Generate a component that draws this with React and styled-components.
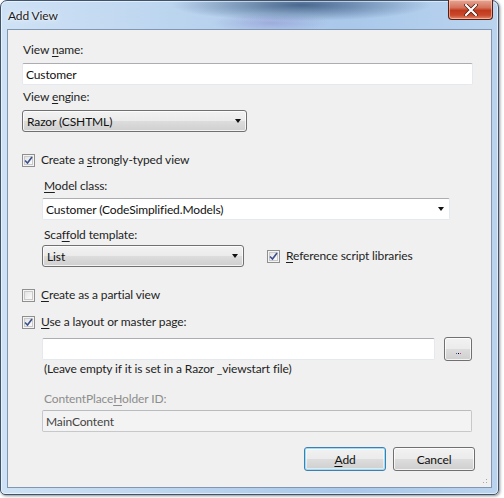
import React from "react";
import styled, { createGlobalStyle, css } from "styled-components";

const Global = createGlobalStyle`
  html, body { margin: 0; padding: 0; background: #ffffff; }
  body { width: 504px; height: 498px; overflow: hidden; font-family: "Lato", "Noto Sans", sans-serif; }
  * { box-sizing: border-box; }
`;

const FONT = `font-family: "Lato", "Noto Sans", sans-serif; font-size: 12px; letter-spacing: -0.12px;`;

const Window = styled.div`
  width: 499px;
  height: 495px;
  border: 1px solid #3e546e;
  border-radius: 7px 7px 5px 5px;
  background:
    radial-gradient(ellipse 130px 16px at 300px 4px, rgba(40, 70, 110, 0.75), rgba(40, 70, 110, 0) 100%),
    radial-gradient(ellipse 60px 10px at 270px 22px, rgba(120, 110, 190, 0.35), rgba(120, 110, 190, 0) 100%),
    linear-gradient(to right, #cfe2f5 0%, #b9d3ee 40%, #a9c8ea 70%, #bad4ef 100%);
  box-shadow: 1px 1px 3px rgba(0, 0, 0, 0.45), inset 0 0 0 1px rgba(255, 255, 255, 0.55);
  display: flex;
  flex-direction: column;
  padding: 0 6px 6px 6px;
`;

const TitleBar = styled.div`
  height: 28px;
  display: flex;
  align-items: flex-start;
  justify-content: space-between;
`;

const Title = styled.div`
  ${FONT}
  color: #1a1a1a;
  margin: 7px 0 0 1px;
  text-shadow: 0 0 6px rgba(255, 255, 255, 0.9), 0 0 2px rgba(255, 255, 255, 0.9);
`;

const CloseButton = styled.div`
  width: 45px;
  height: 20px;
  margin-right: -1px;
  margin-top: -1px;
  border: 1px solid #5b1d12;
  border-top: none;
  border-radius: 0 0 4px 4px;
  background: linear-gradient(to bottom, #e6a695 0%, #d5735c 40%, #c1391d 55%, #c9492c 80%, #e08a6a 100%);
  box-shadow: inset 0 0 0 1px rgba(255, 220, 200, 0.55);
  display: flex;
  align-items: center;
  justify-content: center;
`;

const Client = styled.div`
  flex: 1;
  background: #f0f0f0;
  border: 1px solid #8196b3;
  position: relative;
  display: flex;
  flex-direction: column;
  padding: 12px 0 0 14px;
`;

const Label = styled.div`
  ${FONT}
  line-height: 16px;
  color: ${(p) => (p.$disabled ? "#8d8d8d" : "#1e1e1e")};
  margin-top: ${(p) => p.$mt || 0}px;
  margin-left: ${(p) => p.$indent || 0}px;
  white-space: nowrap;
`;

const U = styled.span`
  text-decoration: underline;
  text-underline-offset: 2px;
`;

const TextBox = styled.div`
  ${FONT}
  width: ${(p) => p.$w}px;
  height: 22px;
  margin-top: ${(p) => p.$mt || 0}px;
  margin-left: ${(p) => p.$indent || 0}px;
  background: ${(p) => (p.$disabled ? "#f3f3f3" : "#ffffff")};
  border: 1px solid ${(p) => (p.$disabled ? "#c6c8ca" : "#e3e9ef")};
  border-top-color: ${(p) => (p.$disabled ? "#b9bcbf" : "#abadb3")};
  border-radius: 2px;
  display: flex;
  align-items: center;
  padding: 0 3px;
  color: ${(p) => (p.$disabled ? "#444" : "#111")};
  position: relative;
  flex-shrink: 0;
`;

const Arrow = styled.span`
  position: absolute;
  right: ${(p) => p.$right || 6}px;
  top: 50%;
  margin-top: -2px;
  width: 0;
  height: 0;
  border-left: 3.5px solid transparent;
  border-right: 3.5px solid transparent;
  border-top: 4px solid #111;
`;

const buttonFace = css`
  background: linear-gradient(to bottom, #f2f2f2 0%, #ebebeb 49%, #dddddd 50%, #cfcfcf 100%);
  border: 1px solid #707070;
  border-radius: 3px;
  box-shadow: inset 0 0 0 1px rgba(255, 255, 255, 0.75);
`;

const DropDown = styled.div`
  ${FONT}
  ${buttonFace}
  width: ${(p) => p.$w}px;
  height: 22px;
  margin-top: ${(p) => p.$mt || 0}px;
  margin-left: ${(p) => p.$indent || 0}px;
  display: flex;
  align-items: center;
  padding: 0 4px;
  color: #111;
  position: relative;
  flex-shrink: 0;
`;

const CheckRow = styled.div`
  display: flex;
  align-items: center;
  gap: 6px;
  margin-top: ${(p) => p.$mt || 0}px;
  margin-left: ${(p) => p.$indent || 0}px;
  height: 16px;
`;

const Box = styled.span`
  width: 13px;
  height: 13px;
  border: 1px solid #8e8f8f;
  background: linear-gradient(135deg, #dcdcdc 0%, #f4f4f4 60%, #ffffff 100%);
  box-shadow: inset 0 0 0 1px #f4f4f4, inset 0 0 0 2px #c9c9c9;
  display: flex;
  align-items: center;
  justify-content: center;
  flex-shrink: 0;
`;

const Row = styled.div`
  display: flex;
  align-items: center;
  margin-top: ${(p) => p.$mt || 0}px;
  margin-left: ${(p) => p.$indent || 0}px;
  gap: ${(p) => p.$gap || 0}px;
`;

const SmallButton = styled.div`
  ${buttonFace}
  width: 28px;
  height: 24px;
  display: flex;
  align-items: flex-end;
  justify-content: center;
  padding-bottom: 6px;
  gap: 1px;
`;

const Dot = styled.span`
  width: 1px;
  height: 1px;
  background: ${(p) => p.$c};
`;

const ButtonBar = styled.div`
  display: flex;
  justify-content: flex-end;
  gap: 7px;
  margin-top: 15px;
  margin-right: 16px;
`;

const PushButton = styled.div`
  ${FONT}
  ${buttonFace}
  width: ${(p) => p.$w}px;
  height: 24px;
  display: flex;
  align-items: center;
  justify-content: center;
  color: #111;
  ${(p) =>
    p.$default &&
    css`
      border-color: #3c7fb1;
      box-shadow: inset 0 0 0 1px #9fdcf6, inset 0 0 0 2px rgba(255, 255, 255, 0.5);
    `}
`;

const Grip = styled.div`
  position: absolute;
  right: 2px;
  bottom: 2px;
  width: 10px;
  height: 10px;
  background-image: radial-gradient(circle, #a8a8a8 0.7px, transparent 0.9px);
  background-size: 3px 3px;
  clip-path: polygon(100% 0, 100% 100%, 0 100%);
`;

function Check({ checked }) {
  return (
    <Box>
      {checked && (
        <svg width="9" height="9" viewBox="0 0 9 9">
          <path d="M1 4.5 L3.5 7 L8 1" fill="none" stroke="#3b4f8c" strokeWidth="1.6" />
        </svg>
      )}
    </Box>
  );
}

export default function App() {
  return (
    <>
      <Global />
      <Window>
        <TitleBar>
          <Title>Add View</Title>
          <CloseButton>
            <svg width="14" height="12" viewBox="0 0 14 12">
              <path d="M2 1 L12 11 M12 1 L2 11" stroke="#4a1a10" strokeWidth="3.6" strokeLinecap="round" />
              <path d="M2 1 L12 11 M12 1 L2 11" stroke="#ffffff" strokeWidth="2.2" strokeLinecap="round" />
            </svg>
          </CloseButton>
        </TitleBar>
        <Client>
          <Label $indent={1}>
            View <U>n</U>ame:
          </Label>
          <TextBox $w={451} $mt={5}>Customer</TextBox>
          <Label $mt={4} $indent={1}>
            View <U>e</U>ngine:
          </Label>
          <DropDown $w={225} $mt={5}>
            Razor (CSHTML)
            <Arrow $right={5} />
          </DropDown>
          <CheckRow $mt={20}>
            <Check checked />
            <Label>
              Create a <U>s</U>trongly-typed view
            </Label>
          </CheckRow>
          <Label $mt={10} $indent={22}>
            <U>M</U>odel class:
          </Label>
          <TextBox $w={408} $mt={4} $indent={20}>
            Customer (CodeSimplified.Models)
            <Arrow $right={5} />
          </TextBox>
          <Label $mt={7} $indent={22}>
            Sca<U>ff</U>old template:
          </Label>
          <Row $mt={2} $indent={20} $gap={23}>
            <DropDown $w={202}>
              List
              <Arrow $right={5} />
            </DropDown>
            <CheckRow>
              <Check checked />
              <Label>
                <U>R</U>eference script libraries
              </Label>
            </CheckRow>
          </Row>
          <CheckRow $mt={20}>
            <Check />
            <Label>
              <U>C</U>reate as a partial view
            </Label>
          </CheckRow>
          <CheckRow $mt={11}>
            <Check checked />
            <Label>
              <U>U</U>se a layout or master page:
            </Label>
          </CheckRow>
          <Row $mt={7} $indent={20} $gap={9}>
            <TextBox $w={393} />
            <SmallButton>
              <Dot $c="#3c55c8" />
              <Dot $c="#000" />
              <Dot $c="#c83c8a" />
            </SmallButton>
          </Row>
          <Label $mt={0} $indent={22}>
            (Leave empty if it is set in a Razor _viewstart file)
          </Label>
          <Label $mt={14} $indent={22} $disabled>
            ContentPlace<U>H</U>older ID:
          </Label>
          <TextBox $w={430} $mt={3} $indent={20} $disabled>
            MainContent
          </TextBox>
          <ButtonBar>
            <PushButton $w={82} $default>
              <U>A</U>dd
            </PushButton>
            <PushButton $w={82}>Cancel</PushButton>
          </ButtonBar>
          <Grip />
        </Client>
      </Window>
    </>
  );
}
